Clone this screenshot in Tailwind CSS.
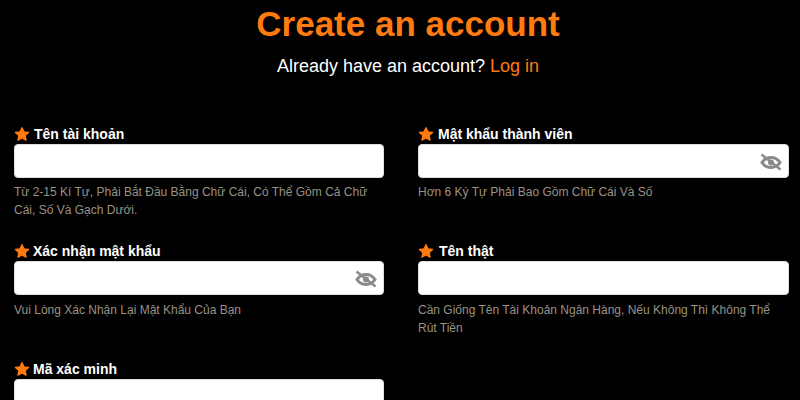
<!DOCTYPE html>
<html lang="vi">
<head>
  <meta charset="UTF-8">
  <title>Create an account</title>
  <script src="https://cdn.jsdelivr.net/npm/@tailwindcss/browser@4"></script>
</head>
<body class="bg-black h-[400px] overflow-hidden font-['Liberation_Sans',Arial,sans-serif]">
  <header class="pl-[16px] text-center">
    <h1 class="text-[35px] leading-[48px] font-bold text-[#ff7a0f]">Create an account</h1>
    <p class="mt-[5px] text-lg leading-[26px] text-white">Already have an account? <a href="#" class="text-[#ff7a0f]">Log in</a></p>
  </header>

  <form class="mt-[45.5px] pl-[14px] grid grid-cols-[370px_371px] gap-x-[34px]">
    <div class="h-[117.5px]">
      <label class="flex items-center gap-[4px] h-[18px] mb-[1px] text-sm font-bold text-white">
        <svg class="w-4 h-4 text-[#ff7a0f]" viewBox="0 0 24 24" fill="currentColor" stroke="currentColor" stroke-width="2" stroke-linejoin="round"><path d="M12 2.500l2.900 6.300 6.900.8-5.100 4.700 1.400 6.800-6.100-3.400-6.100 3.400 1.400-6.800-5.100-4.700 6.900-.8z"/></svg>
        Tên tài khoản
      </label>
      <input type="text" class="block w-full h-[34px] bg-white rounded border border-[#ddd]">
      <p class="mt-[5.5px] text-xs leading-[18px] text-[#9a9284]">Từ 2-15 Kí Tự, Phải Bắt Đầu Bằng Chữ Cái, Có Thể Gồm Cả Chữ Cái, Số Và Gạch Dưới.</p>
    </div>

    <div class="h-[117.5px]">
      <label class="flex items-center gap-[4px] h-[18px] mb-[1px] text-sm font-bold text-white">
        <svg class="w-4 h-4 text-[#ff7a0f]" viewBox="0 0 24 24" fill="currentColor" stroke="currentColor" stroke-width="2" stroke-linejoin="round"><path d="M12 2.500l2.900 6.300 6.900.8-5.100 4.700 1.400 6.800-6.100-3.400-6.100 3.400 1.400-6.800-5.100-4.700 6.900-.8z"/></svg>
        Mật khẩu thành viên
      </label>
      <div class="relative">
        <input type="password" class="block w-full h-[34px] bg-white rounded border border-[#ddd]">
        <svg class="absolute right-[7px] top-[8px] w-[22px] h-[20px] text-[#8a8a8a]" viewBox="0 0 22 20" fill="none" stroke="currentColor"><path d="M2 10.500c2.300-3.500 5.300-5 9-5s6.700 1.500 9 5c-2.300 3.500-5.300 5-9 5s-6.700-1.500-9-5z" stroke-width="3"/><circle cx="11" cy="10.500" r="3" fill="currentColor" stroke="none"/><path d="M1.500 2.500l19 15" stroke-width="2.500"/></svg>
      </div>
      <p class="mt-[5.5px] text-xs leading-[18px] text-[#9a9284]">Hơn 6 Ký Tự Phải Bao Gồm Chữ Cái Và Số</p>
    </div>

    <div class="h-[117.5px]">
      <label class="flex items-center gap-[3px] h-[18px] mb-[1px] text-sm font-bold text-white">
        <svg class="w-4 h-4 text-[#ff7a0f]" viewBox="0 0 24 24" fill="currentColor" stroke="currentColor" stroke-width="2" stroke-linejoin="round"><path d="M12 2.500l2.900 6.300 6.900.8-5.100 4.700 1.400 6.800-6.100-3.400-6.100 3.400 1.400-6.800-5.100-4.700 6.900-.8z"/></svg>
        Xác nhận mật khẩu
      </label>
      <div class="relative">
        <input type="password" class="block w-full h-[34px] bg-white rounded border border-[#ddd]">
        <svg class="absolute right-[7px] top-[8px] w-[22px] h-[20px] text-[#8a8a8a]" viewBox="0 0 22 20" fill="none" stroke="currentColor"><path d="M2 10.500c2.300-3.500 5.300-5 9-5s6.700 1.500 9 5c-2.300 3.500-5.300 5-9 5s-6.700-1.500-9-5z" stroke-width="3"/><circle cx="11" cy="10.500" r="3" fill="currentColor" stroke="none"/><path d="M1.500 2.500l19 15" stroke-width="2.500"/></svg>
      </div>
      <p class="mt-[6px] text-xs leading-[18px] text-[#9a9284]">Vui Lòng Xác Nhận Lại Mật Khẩu Của Bạn</p>
    </div>

    <div class="h-[117.5px]">
      <label class="flex items-center gap-[5px] h-[18px] mb-[1px] text-sm font-bold text-white">
        <svg class="w-4 h-4 text-[#ff7a0f]" viewBox="0 0 24 24" fill="currentColor" stroke="currentColor" stroke-width="2" stroke-linejoin="round"><path d="M12 2.500l2.900 6.300 6.900.8-5.100 4.700 1.400 6.800-6.100-3.400-6.100 3.400 1.400-6.800-5.100-4.700 6.900-.8z"/></svg>
        Tên thật
      </label>
      <input type="text" class="block w-full h-[34px] bg-white rounded border border-[#ddd]">
      <p class="mt-[6px] text-xs leading-[18px] text-[#9a9284]">Cần Giống Tên Tài Khoản Ngân Hàng, Nếu Không Thì Không Thể Rút Tiền</p>
    </div>

    <div>
      <label class="flex items-center gap-[3px] h-[18px] mb-[1px] text-sm font-bold text-white">
        <svg class="w-4 h-4 text-[#ff7a0f]" viewBox="0 0 24 24" fill="currentColor" stroke="currentColor" stroke-width="2" stroke-linejoin="round"><path d="M12 2.500l2.900 6.300 6.900.8-5.100 4.700 1.400 6.800-6.100-3.400-6.100 3.400 1.400-6.800-5.100-4.700 6.900-.8z"/></svg>
        Mã xác minh
      </label>
      <input type="text" class="block w-full h-[34px] bg-white rounded border border-[#ddd]">
    </div>
  </form>
</body>
</html>
